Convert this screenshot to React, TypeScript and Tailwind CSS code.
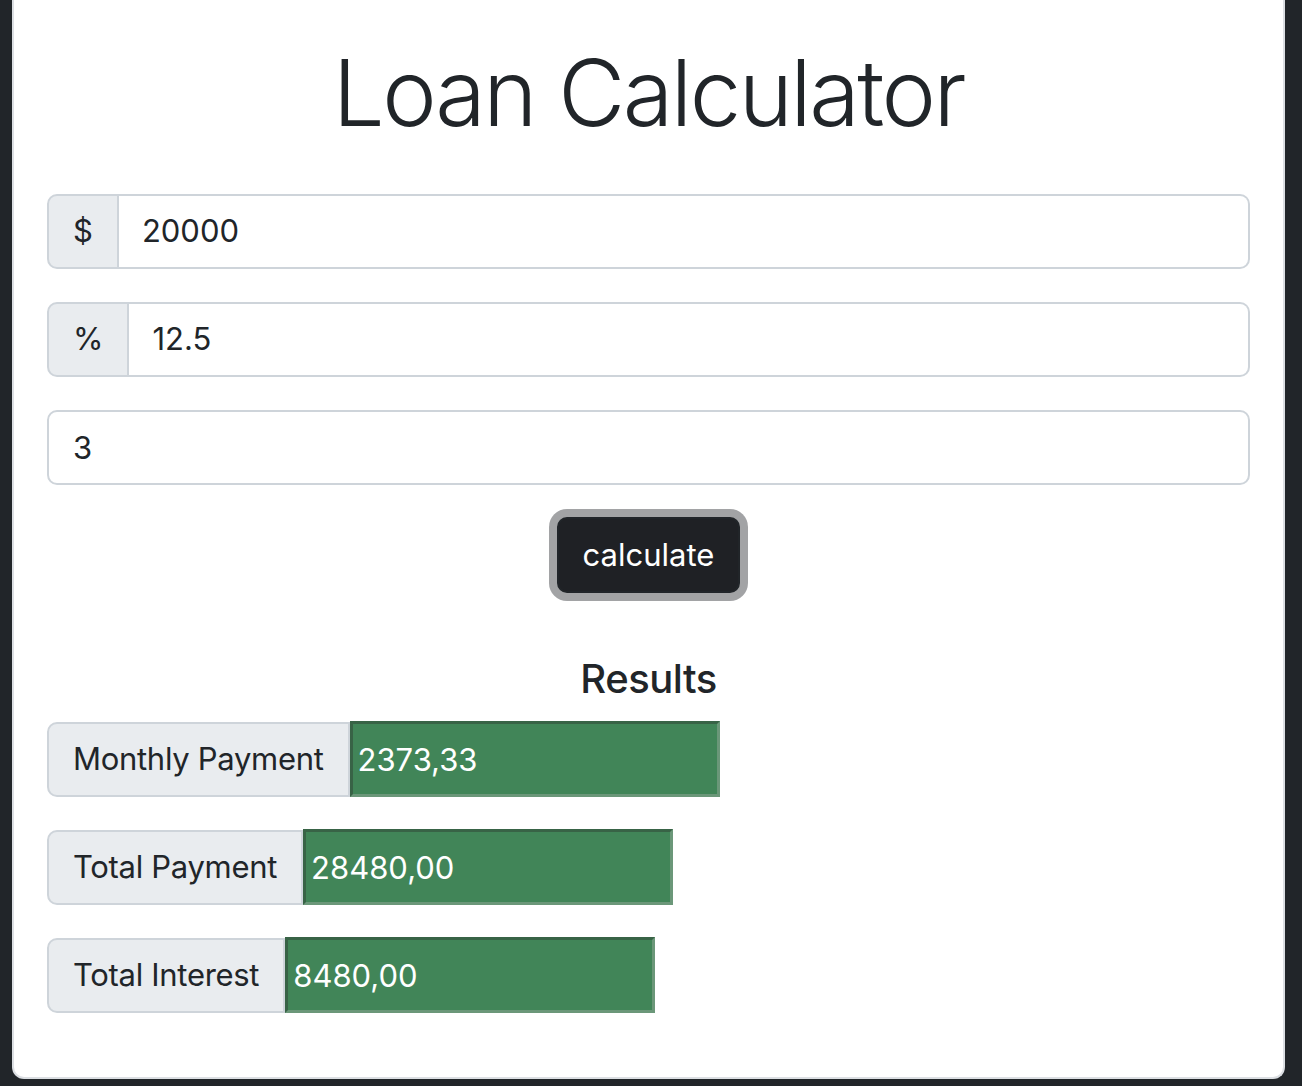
import { useState } from "react";

type Result = { label: string; value: string };

const results: Result[] = [
  { label: "Monthly Payment", value: "2373,33" },
  { label: "Total Payment", value: "28480,00" },
  { label: "Total Interest", value: "8480,00" },
];

function App() {
  const [amount, setAmount] = useState("20000");
  const [interest, setInterest] = useState("12.5");
  const [years, setYears] = useState("3");

  return (
    <div
      className="min-h-screen bg-[#212529] text-[#212529]"
      style={{ fontFamily: "Inter, 'Noto Sans', sans-serif" }}
    >
      <div className="ml-[12px] w-[1273px] bg-white border-2 border-t-0 border-[#dcdfe3] rounded-b-[12px] px-[33px] pt-[33px] pb-[32px]">
        <h1 className="text-center text-[92px] leading-[120px] font-light tracking-[-2.5px] mb-[41px]">
          Loan Calculator
        </h1>

        <form onSubmit={(e) => e.preventDefault()}>
          <div className="flex h-[75px] mb-[33px]">
            <span className="flex items-center px-[24px] bg-[#e9ecef] border-2 border-[#ced4da] rounded-l-[10px] text-[31px]">
              $
            </span>
            <input
              value={amount}
              onChange={(e) => setAmount(e.target.value)}
              className="flex-1 min-w-0 border-2 border-l-0 border-[#ced4da] rounded-r-[10px] px-[23px] text-[31px] outline-none"
            />
          </div>

          <div className="flex h-[75px] mb-[33px]">
            <span className="flex items-center px-[24px] bg-[#e9ecef] border-2 border-[#ced4da] rounded-l-[10px] text-[31px]">
              %
            </span>
            <input
              value={interest}
              onChange={(e) => setInterest(e.target.value)}
              className="flex-1 min-w-0 border-2 border-l-0 border-[#ced4da] rounded-r-[10px] px-[23px] text-[31px] outline-none"
            />
          </div>

          <input
            value={years}
            onChange={(e) => setYears(e.target.value)}
            className="block w-full h-[75px] border-2 border-[#ced4da] rounded-[10px] px-[24px] text-[31px] outline-none mb-[32px]"
          />

          <div className="flex justify-center">
            <button
              type="submit"
              className="h-[76px] px-[24px] bg-[#1f2125] text-white text-[31px] border-2 border-[#212529] rounded-[10px] shadow-[0_0_0_8px_#a2a3a5]"
            >
              calculate
            </button>
          </div>
        </form>

        <h5 className="mt-[62px] mb-[18px] text-center text-[40px] leading-[48px] font-medium tracking-[-0.5px]">
          Results
        </h5>

        {results.map((r) => (
          <div key={r.label} className="flex items-center h-[76px] mb-[32px]">
            <span className="flex items-center h-[75px] px-[24px] bg-[#e9ecef] border-2 border-[#ced4da] rounded-l-[10px] text-[31px] tracking-[-0.3px]">
              {r.label}
            </span>
            <input
              readOnly
              value={r.value}
              className="w-[370px] h-[76px] bg-[#418558] text-white text-[31px] pl-[5px] outline-none border-[3px] border-t-[#386346] border-l-[#386346] border-r-[#6b9779] border-b-[#6b9779]"
            />
          </div>
        ))}
      </div>
    </div>
  );
}

export default App;
